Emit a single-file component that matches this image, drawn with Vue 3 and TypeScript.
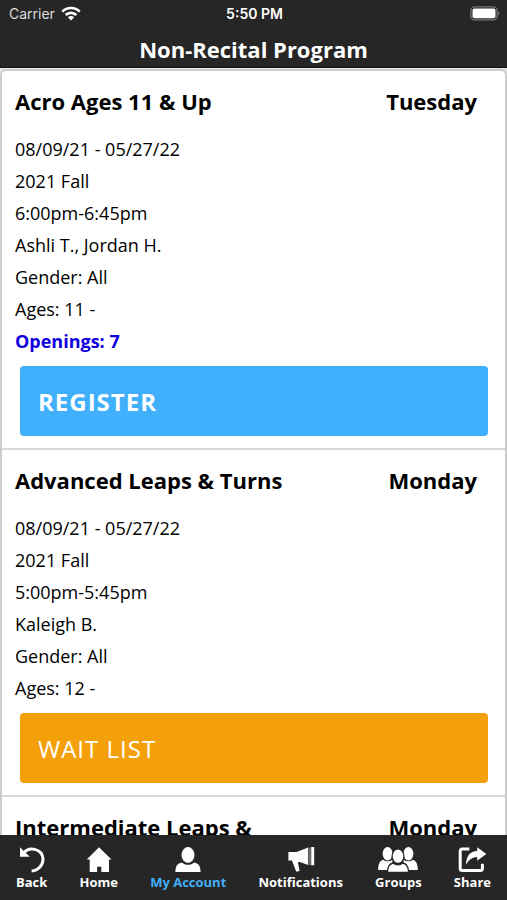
<script setup lang="ts">
interface DanceClass {
  title: string
  day: string
  details: string[]
  openings?: number
  action?: 'register' | 'waitlist'
}

interface Tab {
  id: string
  label: string
  width: number
  active?: boolean
}

const classes: DanceClass[] = [
  {
    title: 'Acro Ages 11 & Up',
    day: 'Tuesday',
    details: ['08/09/21 - 05/27/22', '2021 Fall', '6:00pm-6:45pm', 'Ashli T., Jordan H.', 'Gender: All', 'Ages: 11 -'],
    openings: 7,
    action: 'register',
  },
  {
    title: 'Advanced Leaps & Turns',
    day: 'Monday',
    details: ['08/09/21 - 05/27/22', '2021 Fall', '5:00pm-5:45pm', 'Kaleigh B.', 'Gender: All', 'Ages: 12 -'],
    action: 'waitlist',
  },
  { title: 'Intermediate Leaps &', day: 'Monday', details: [] },
]

const tabs: Tab[] = [
  { id: 'back', label: 'Back', width: 28 },
  { id: 'home', label: 'Home', width: 28 },
  { id: 'account', label: 'My Account', width: 28, active: true },
  { id: 'notifications', label: 'Notifications', width: 28 },
  { id: 'groups', label: 'Groups', width: 42 },
  { id: 'share', label: 'Share', width: 30 },
]
</script>

<template>
  <div class="app">
    <header class="top">
      <div class="status">
        <div class="carrier">
          <span>Carrier</span>
          <svg class="wifi" viewBox="0 0 20 15" width="20" height="15">
            <g fill="none" stroke="#fff" stroke-width="2.7">
              <path d="M1.3 5.6a12.3 12.3 0 0 1 17.4 0" />
              <path d="M4.7 9a7.5 7.5 0 0 1 10.6 0" />
            </g>
            <path d="M10 14.4 6.9 11.3a4.4 4.4 0 0 1 6.2 0Z" fill="#fff" />
          </svg>
        </div>
        <span class="time">5:50 PM</span>
        <svg class="battery" viewBox="0 0 30 15" width="30" height="15">
          <rect x=".9" y=".9" width="26.2" height="13" rx="3.8" fill="none" stroke="#777" stroke-width="1.3" />
          <rect x="2.5" y="2.5" width="23" height="9.8" rx="2" fill="#fff" />
          <path d="M28.2 5.2c1.8.7 1.8 3.7 0 4.4Z" fill="#777" />
        </svg>
      </div>
      <h1>Non-Recital Program</h1>
    </header>

    <main>
      <ul class="list">
        <li v-for="item in classes" :key="item.title" class="item">
          <div class="heading">
            <h2>{{ item.title }}</h2>
            <span class="day">{{ item.day }}</span>
          </div>
          <p v-for="line in item.details" :key="line" class="line">{{ line }}</p>
          <p v-if="item.openings" class="line openings">Openings: {{ item.openings }}</p>
          <button v-if="item.action" type="button" class="action" :class="item.action">
            {{ item.action === 'register' ? 'REGISTER' : 'WAIT LIST' }}
          </button>
        </li>
      </ul>
    </main>

    <nav class="tabs">
      <a v-for="tab in tabs" :key="tab.id" href="#" class="tab" :class="{ active: tab.active }">
        <svg :viewBox="`0 0 ${tab.width} 28`" :width="tab.width" height="28" fill="#fff">
          <template v-if="tab.id === 'back'">
            <path d="M5.4 7.2C11-.1 23.8 2.5 24.9 12.3c.6 6.6-4.6 12.4-11.3 12.6" fill="none" stroke="#fff" stroke-width="3" />
            <path d="M2 1.2v9.5h9.8L9.2 8.2 4.2 3.6Z" />
          </template>
          <path v-else-if="tab.id === 'home'" d="M14 1.3 26.5 13.5H24V26h-7.7v-5.3h-4.2V26H4.7V13.5H1.7Z" />
          <template v-else-if="tab.id === 'account'">
            <ellipse cx="14" cy="9" rx="6.5" ry="7.9" />
            <path d="M1.4 26c0-6 2-8.8 6.5-9.6 1.8 1.7 3.7 2.4 6.1 2.4s4.300-.7 6.100-2.400c4.500.8 6.500 3.600 6.500 9.600Z" />
          </template>
          <template v-else-if="tab.id === 'notifications'">
            <path d="M1.400 6h8.100L21.200 1.600v17.300l-8.400-3-1.900.3 1.700 8.900-3.300.7-4.400-11.300H1.400Z" />
            <path d="M22.300 1.400h1.300v17.800h-1.300Z" fill="#999" />
            <path d="M24.200 1h3v18.300h-3Z" />
          </template>
          <template v-else-if="tab.id === 'groups'">
            <ellipse cx="10.600" cy="7.800" rx="5" ry="6.700" />
            <ellipse cx="31.400" cy="7.800" rx="5" ry="6.700" />
            <path d="M1.200 24c0-6 1.600-9.300 5-10.200 2.400 2 6.200 2 9.200 0V24Z" />
            <path d="M40.800 24c0-6-1.600-9.300-5-10.200-2.400 2-6.200 2-9.200 0V24Z" />
            <g stroke="#262626" stroke-width="1.300">
              <ellipse cx="21" cy="10.200" rx="5.900" ry="7.300" />
              <path d="M10.400 26.500c0-6.300 1.800-8.700 5.800-9.500 2.800 2.300 6.800 2.300 9.600 0 4 .8 5.800 3.200 5.800 9.500Z" />
            </g>
          </template>
          <template v-else>
            <path d="M12.300 3H5.200a2 2 0 0 0-2 2v17.500a2 2 0 0 0 2 2h18.200a2 2 0 0 0 2-2v-4.800" fill="none" stroke="#fff" stroke-width="3" />
            <path d="M9 18.700C9.200 9.500 13.300 5.400 20.200 5V1.300L29.300 8l-9.100 6.800V11C15.300 11.100 12 13.600 9 18.700Z" />
          </template>
        </svg>
        <span>{{ tab.label }}</span>
      </a>
    </nav>
  </div>
</template>

<style>
body {
  margin: 0;
  background: #fff;
}
</style>

<style scoped>
.app {
  display: flex;
  flex-direction: column;
  height: 100vh;
  overflow: hidden;
  font-family: 'Open Sans', 'Liberation Sans', sans-serif;
  color: #000;
}

.top {
  flex: none;
  box-sizing: border-box;
  background: #262626;
  border-bottom: 1px solid #111;
  color: #fff;
}

.status {
  display: grid;
  grid-template-columns: 1fr auto 1fr;
  align-items: center;
  height: 27px;
  padding: 0 7px 0 9px;
  font-family: Inter, 'Liberation Sans', sans-serif;
  font-size: 14px;
}

.carrier {
  display: flex;
  align-items: center;
  gap: 6px;
  color: #ddd;
}

.time {
  font-size: 14px;
  font-weight: 600;
}

.battery {
  justify-self: end;
}

h1 {
  margin: 0;
  padding: 8px 0 3px;
  font-size: 22px;
  font-weight: 700;
  line-height: 29px;
  text-align: center;
}

main {
  flex: 1;
  min-height: 0;
  overflow: hidden;
  padding-top: 1px;
  background: #e8e8e8;
}

.list {
  margin: 0;
  padding: 0;
  list-style: none;
  border: 2px solid #ccc;
  border-radius: 6px;
  background: #fff;
}

.item {
  padding: 14px 16px 12px 13px;
}

.item + .item {
  border-top: 2px solid #d8d8d8;
}

.heading {
  display: flex;
  justify-content: space-between;
  padding-right: 12px;
  margin-bottom: 16px;
  font-size: 22px;
  font-weight: 700;
  line-height: 32px;
}

h2 {
  margin: 0;
  font-size: inherit;
  font-weight: inherit;
}

.line {
  margin: 0;
  font-size: 18px;
  line-height: 32px;
}

.openings {
  color: #1000e0;
  font-weight: 700;
}

.action {
  display: block;
  width: calc(100% - 6px);
  height: 70px;
  margin: 9px 1px 0 5px;
  padding: 0 18px;
  border: 0;
  border-radius: 4px;
  color: #fff;
  font-family: inherit;
  font-size: 24px;
  letter-spacing: 1px;
  text-align: left;
}

.register {
  background: #40affc;
  font-weight: 700;
}

.waitlist {
  background: #f4a00b;
}

.tabs {
  flex: none;
  display: flex;
  justify-content: space-between;
  box-sizing: border-box;
  height: 65px;
  padding: 11px 16px 0;
  background: #262626;
}

.tab {
  display: flex;
  flex-direction: column;
  align-items: center;
  color: #fff;
  font-size: 13px;
  font-weight: 700;
  line-height: 16px;
  text-decoration: none;
}

.tab.active {
  color: #43aef8;
}
</style>
